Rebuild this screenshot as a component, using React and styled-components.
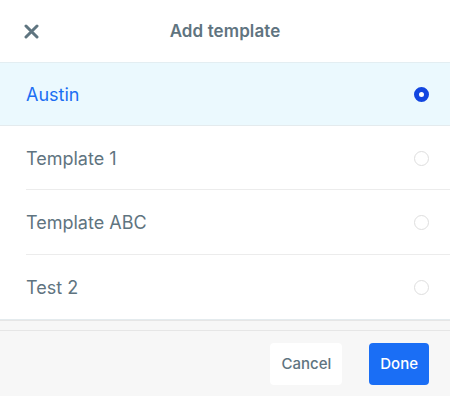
import React, { useState } from 'react';
import styled, { createGlobalStyle } from 'styled-components';

const GlobalStyle = createGlobalStyle`
  html, body {
    margin: 0;
    padding: 0;
    background: #ffffff;
  }
  body {
    font-family: Inter, "Helvetica Neue", Arial, sans-serif;
    -webkit-font-smoothing: antialiased;
  }
`;

const Sheet = styled.div`
  width: 450px;
  height: 396px;
  display: flex;
  flex-direction: column;
  background: #ffffff;
`;

const Header = styled.div`
  height: 63px;
  display: grid;
  grid-template-columns: 60px 1fr 60px;
  align-items: center;
  border-bottom: 1px solid #e3eef2;
  box-sizing: border-box;
`;

const CloseButton = styled.button`
  border: none;
  background: none;
  padding: 0 0 0 24px;
  display: flex;
  align-items: center;
  cursor: pointer;
  height: 100%;
`;

const Title = styled.h1`
  margin: 0;
  font-size: 17px;
  font-weight: 600;
  color: #5f7480;
  text-align: center;
  letter-spacing: 0.1px;
`;

const List = styled.div`
  display: flex;
  flex-direction: column;
`;

const Row = styled.div`
  height: ${({ $h }) => $h}px;
  display: flex;
  align-items: center;
  justify-content: space-between;
  padding: 0 21px 0 26px;
  box-sizing: border-box;
  background: ${({ $selected }) => ($selected ? '#ebf9fe' : '#ffffff')};
  cursor: pointer;
  position: relative;
  ${({ $inset }) =>
    $inset
      ? `&::after {
    content: '';
    position: absolute;
    left: 26px;
    right: 0;
    bottom: 0;
    height: 1px;
    background: #ececec;
  }`
      : `border-bottom: 1px solid #e4ebee;`}
`;

const RowLabel = styled.span`
  font-size: 18px;
  color: ${({ $selected }) => ($selected ? '#1b6ef3' : '#5f7480')};
`;

const Radio = styled.span`
  width: 15px;
  height: 15px;
  border-radius: 50%;
  box-sizing: border-box;
  border: ${({ $checked }) => ($checked ? '5px solid #1246e0' : '1.5px solid #dedede')};
  background: #ffffff;
`;

const Spacer = styled.div`
  height: 11px;
  background: #f7f7f7;
  border-top: 1px solid #e6e6e6;
  border-bottom: 1px solid #e6e6e6;
  box-sizing: border-box;
`;

const Footer = styled.div`
  flex: 1;
  background: #f7f7f7;
  display: flex;
  align-items: center;
  justify-content: flex-end;
  gap: 27px;
  padding-right: 21px;
`;

const Button = styled.button`
  height: 42px;
  padding: 0 ${({ $pad }) => $pad}px;
  border: none;
  border-radius: 4px;
  font-family: inherit;
  font-size: 15px;
  font-weight: 500;
  cursor: pointer;
  background: ${({ $primary }) => ($primary ? '#1a6ef5' : '#ffffff')};
  color: ${({ $primary }) => ($primary ? '#ffffff' : '#5f7480')};
`;

const templates = [
  { name: 'Austin', h: 63 },
  { name: 'Template 1', h: 64 },
  { name: 'Template ABC', h: 65 },
  { name: 'Test 2', h: 65 },
];

export default function App() {
  const [selected, setSelected] = useState('Austin');

  return (
    <Sheet>
      <GlobalStyle />
      <Header>
        <CloseButton aria-label="Close">
          <svg width="15" height="15" viewBox="0 0 15 15">
            <path
              d="M2 2 L13 13 M13 2 L2 13"
              stroke="#5f7580"
              strokeWidth="3"
              strokeLinecap="round"
            />
          </svg>
        </CloseButton>
        <Title>Add template</Title>
        <div />
      </Header>
      <List>
        {templates.map((t, i) => {
          const isSel = t.name === selected;
          const inset = i > 0 && i < templates.length - 1;
          return (
            <Row
              key={t.name}
              $h={t.h}
              $selected={isSel}
              $inset={inset}
              onClick={() => setSelected(t.name)}
            >
              <RowLabel $selected={isSel}>{t.name}</RowLabel>
              <Radio $checked={isSel} />
            </Row>
          );
        })}
      </List>
      <Spacer />
      <Footer>
        <Button $pad={11}>Cancel</Button>
        <Button $pad={11} $primary>
          Done
        </Button>
      </Footer>
    </Sheet>
  );
}
